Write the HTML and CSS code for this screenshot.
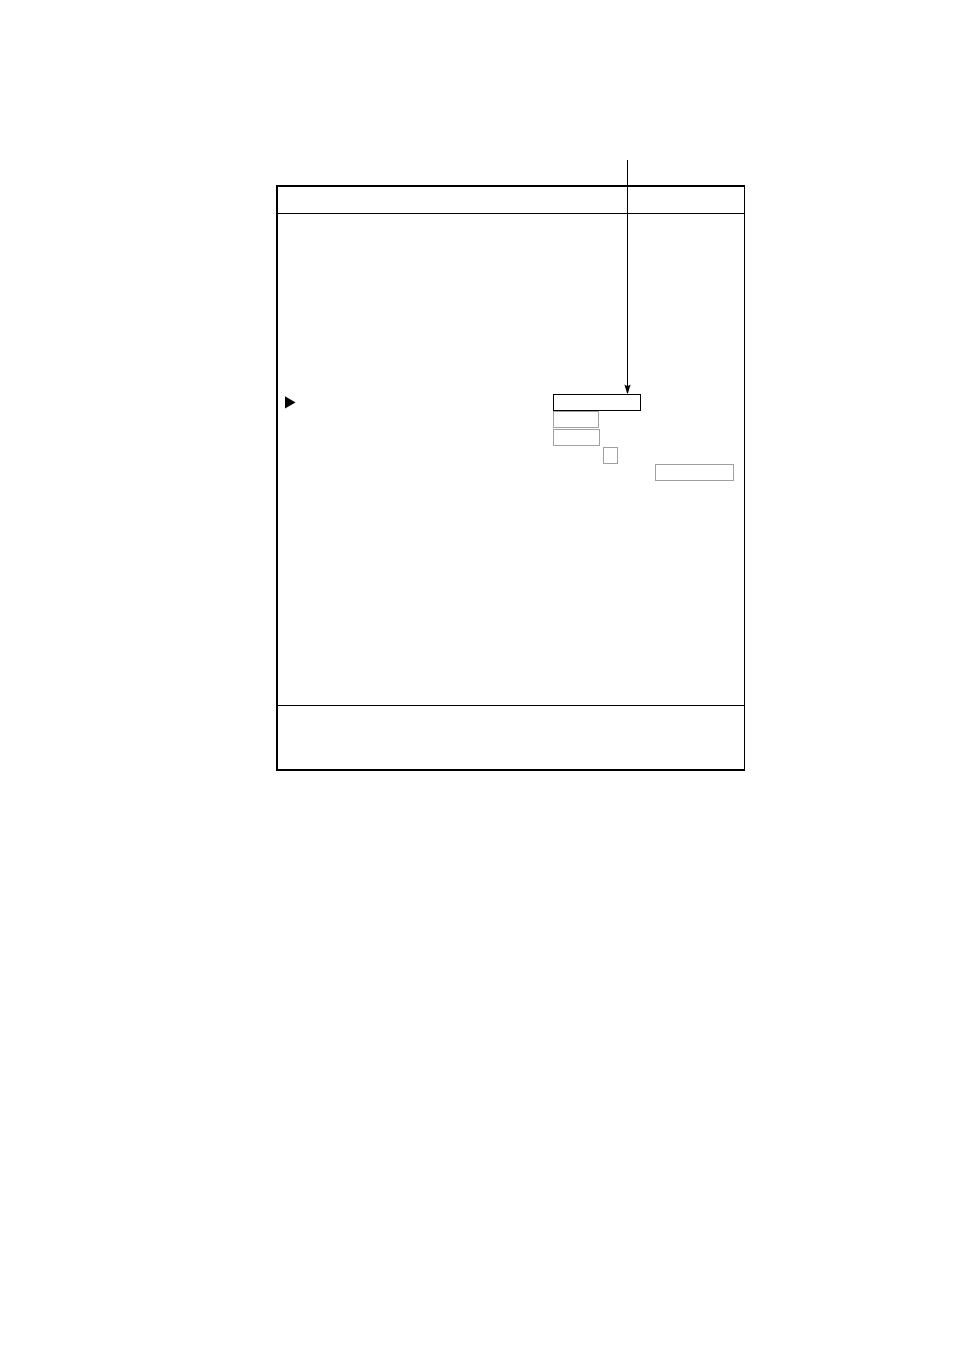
FILE: index.html
```html
<!DOCTYPE html>
<html lang="en">
<head>
<meta charset="utf-8">
<meta name="viewport" content="width=device-width, initial-scale=1">
<link rel="stylesheet" href="styles.css">
</head>
<body>
<main class="page">
  <section class="panel">
    <header class="panel-header"></header>
    <form class="panel-body">
      <div class="row">
        <svg class="marker" width="11" height="13" viewBox="0 0 11 13" aria-hidden="true"><path d="M0 0.3V12.5L10.5 6.4Z"/></svg>
        <div class="cell">
          <input class="field field-active" type="text" aria-label="Selected setting">
          <svg class="pointer" width="7" height="234" viewBox="0 0 7 234" aria-hidden="true">
            <path d="M3 0H4V228H3Z"/>
            <path d="M0.4 224.5L3.5 226.2L6.6 224.5L3.9 233.6H3.1Z"/>
          </svg>
        </div>
      </div>
      <div class="row row-tall"><div class="cell"><input class="field field-short" type="text" aria-label="Setting 2"></div></div>
      <div class="row row-tall"><div class="cell"><input class="field field-medium" type="text" aria-label="Setting 3"></div></div>
      <div class="row"><div class="cell cell-indent"><input class="field field-digit" type="text" aria-label="Setting 4"></div></div>
      <div class="row"><div class="cell cell-end"><input class="field field-long" type="text" aria-label="Setting 5"></div></div>
    </form>
    <footer class="panel-footer"></footer>
  </section>
</main>
</body>
</html>
```

FILE: styles.css
```css
* {
  box-sizing: border-box;
}

body {
  margin: 0;
  background: #fff;
  color: #000;
  font: 12px "Liberation Sans", Arial, sans-serif;
}

.page {
  display: grid;
  grid-template-columns: 276fr 469fr 209fr;
  align-items: start;
  min-height: 100vh;
  padding: 185px 0;
}

.panel {
  grid-column: 2;
  border: 2px solid #000;
  border-right-width: 1px;
}

.panel-header {
  min-height: 27px;
  border-bottom: 1px solid #000;
}

.panel-body {
  padding: 180px 0 224px;
}

.row {
  display: grid;
  grid-template-columns: 275px 1fr;
  align-items: start;
  min-height: 17px;
}

.row-tall {
  min-height: 18px;
}

.marker {
  margin: 2px 0 0 7px;
}

.cell {
  position: relative;
  display: flex;
  grid-column: 2;
}

.cell-indent {
  padding-left: 50px;
}

.cell-end {
  justify-content: flex-end;
  padding-right: 10px;
}

.field {
  height: 17px;
  margin: 0;
  padding: 0 2px;
  border: 1px solid #a0a0a0;
  border-radius: 0;
  background: #fff;
  font: inherit;
}

.field-active {
  width: 88px;
  border-color: #000;
}

.field-short {
  width: 46px;
}

.field-medium {
  width: 47px;
}

.field-digit {
  width: 15px;
}

.field-long {
  width: 79px;
}

/* Callout arrow that ends on the top edge of the selected field */
.pointer {
  position: absolute;
  bottom: 100%;
  left: 71px;
}

.panel-footer {
  min-height: 64px;
  border-top: 1px solid #000;
}
```
